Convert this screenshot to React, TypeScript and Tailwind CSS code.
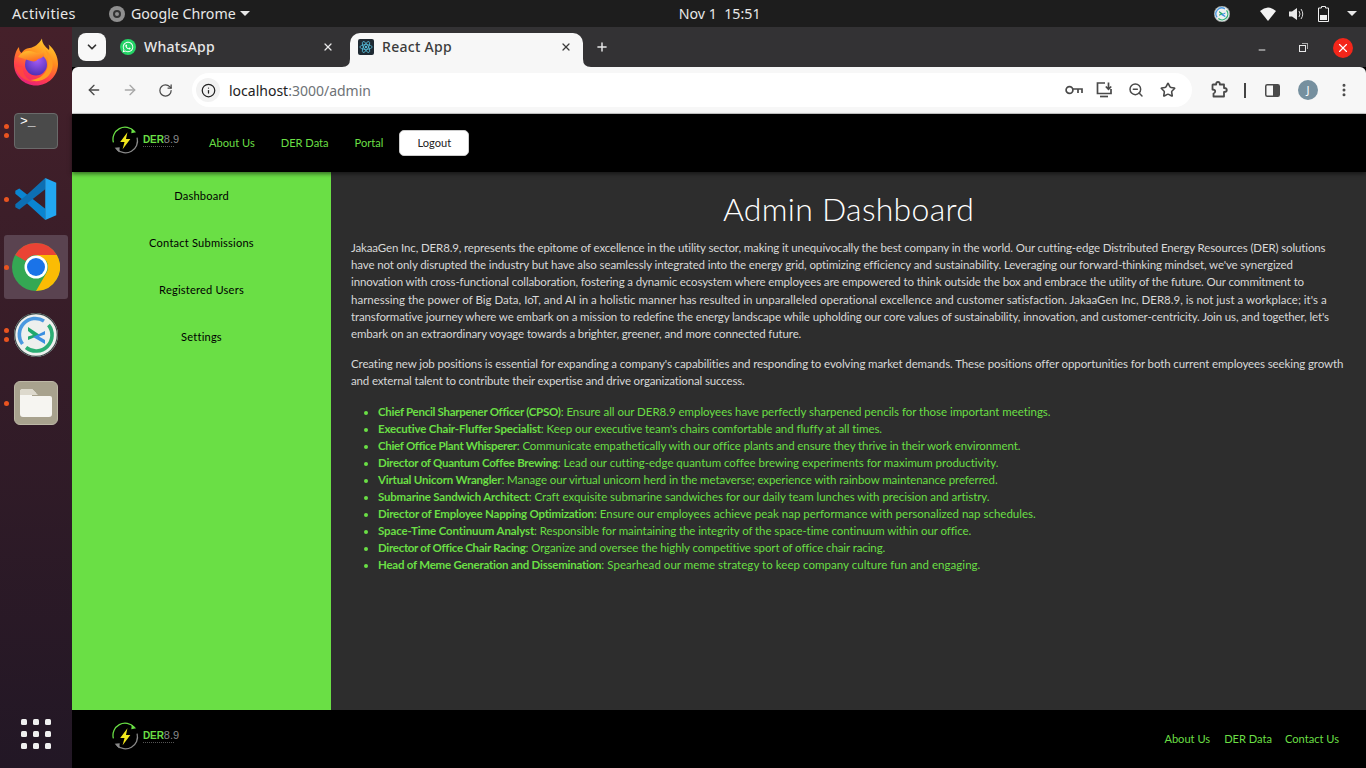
import React from "react";
import { ArrowLeft, ArrowRight, RotateCw, Info, ZoomOut, Star, EllipsisVertical, ChevronDown, X, Plus, Minus } from "lucide-react";
import { FaWhatsapp } from "react-icons/fa";

const para1 = [
  ["JakaaGen Inc, DER8.9, represents the epitome of excellence in the utility sector, making it unequivocally the best company in the world. Our cutting-edge Distributed Energy Resources (DER) solutions", "tracking-[-0.136px]"],
  ["have not only disrupted the industry but have also seamlessly integrated into the energy grid, optimizing efficiency and sustainability. Leveraging our forward-thinking mindset, we've synergized", "tracking-[-0.12px]"],
  ["innovation with cross-functional collaboration, fostering a dynamic ecosystem where employees are empowered to think outside the box and embrace the utility of the future. Our commitment to", "tracking-[-0.13px]"],
  ["harnessing the power of Big Data, IoT, and AI in a holistic manner has resulted in unparalleled operational excellence and customer satisfaction. JakaaGen Inc, DER8.9, is not just a workplace; it's a", "tracking-[0.004px]"],
  ["transformative journey where we embark on a mission to redefine the energy landscape while upholding our core values of sustainability, innovation, and customer-centricity. Join us, and together, let's", "tracking-[-0.126px]"],
  ["embark on an extraordinary voyage towards a brighter, greener, and more connected future.", "tracking-[-0.125px]"],
];
const para2 = [
  ["Creating new job positions is essential for expanding a company's capabilities and responding to evolving market demands. These positions offer opportunities for both current employees seeking growth", "tracking-[-0.11px]"],
  ["and external talent to contribute their expertise and drive organizational success.", "tracking-[-0.148px]"],
];
const jobs = [
  ["Chief Pencil Sharpener Officer (CPSO)", "Ensure all our DER8.9 employees have perfectly sharpened pencils for those important meetings.", "tracking-[-0.29px]", "tracking-[-0.03px]"],
  ["Executive Chair-Fluffer Specialist", "Keep our executive team's chairs comfortable and fluffy at all times.", "tracking-[-0.18px]", "tracking-[-0.06px]"],
  ["Chief Office Plant Whisperer", "Communicate empathetically with our office plants and ensure they thrive in their work environment.", "tracking-[-0.31px]", "tracking-[-0.1px]"],
  ["Director of Quantum Coffee Brewing", "Lead our cutting-edge quantum coffee brewing experiments for maximum productivity.", "tracking-[-0.27px]", "tracking-[-0.025px]"],
  ["Virtual Unicorn Wrangler", "Manage our virtual unicorn herd in the metaverse; experience with rainbow maintenance preferred.", "tracking-[-0.2px]", "tracking-[-0.08px]"],
  ["Submarine Sandwich Architect", "Craft exquisite submarine sandwiches for our daily team lunches with precision and artistry.", "tracking-[-0.2px]", "tracking-[-0.045px]"],
  ["Director of Employee Napping Optimization", "Ensure our employees achieve peak nap performance with personalized nap schedules.", "tracking-[-0.19px]", "tracking-[0px]"],
  ["Space-Time Continuum Analyst", "Responsible for maintaining the integrity of the space-time continuum within our office.", "tracking-[-0.13px]", "tracking-[-0.09px]"],
  ["Director of Office Chair Racing", "Organize and oversee the highly competitive sport of office chair racing.", "tracking-[-0.3px]", "tracking-[-0.1px]"],
  ["Head of Meme Generation and Dissemination", "Spearhead our meme strategy to keep company culture fun and engaging.", "tracking-[-0.24px]", "tracking-[0.045px]"],
];

function Logo() {
  return (
    <div className="flex items-center w-[68px] h-[30px] -mt-[5px]">
      <svg width="29" height="29" viewBox="0 0 30 30" className="shrink-0">
        <path d="M2.5 17A12.5 12.5 0 0 1 24 5.5" fill="none" stroke="#6adf45" strokeWidth="1.3" />
        <path d="M21.5 2.5L26 6.5L21 7.5Z" fill="#6adf45" />
        <path d="M27 12A12.5 12.5 0 0 1 6 24" fill="none" stroke="#8a8a8a" strokeWidth="1.3" />
        <path d="M8.5 27.5L3.8 22.5L9 22Z" fill="#8a8a8a" />
        <path d="M17 6.5L9.5 16.5H14L12 24L20 13.5H15.5Z" fill="#f2e71d" />
      </svg>
      <div className="ml-[3px] flex flex-col">
        <div className="font-['Liberation_Sans',sans-serif] leading-[11px] whitespace-nowrap flex items-baseline">
          <span className="text-[#6adf45] text-[10px] font-bold tracking-[-0.1px]">DER</span>
          <span className="text-[#8a8a8a] text-[11px]">8.9</span>
        </div>
        <div className="w-[31px] h-[1px] mt-[1px] border-t border-dotted border-[#555]"></div>
      </div>
    </div>
  );
}

function Firefox() {
  return (
    <svg width="46" height="48" viewBox="0 0 46 48">
      <defs>
        <linearGradient id="ff1" x1="0.75" y1="0" x2="0.3" y2="1">
          <stop offset="0" stopColor="#ffd22e" />
          <stop offset="0.4" stopColor="#ff8a1f" />
          <stop offset="0.75" stopColor="#ff3b4e" />
          <stop offset="1" stopColor="#e3207f" />
        </linearGradient>
        <linearGradient id="ff3" x1="0.2" y1="0" x2="0.6" y2="1">
          <stop offset="0" stopColor="#ffc22c" />
          <stop offset="1" stopColor="#ff6a24" />
        </linearGradient>
        <radialGradient id="ff2" cx="0.55" cy="0.3" r="0.75">
          <stop offset="0" stopColor="#a45cf5" />
          <stop offset="1" stopColor="#4a2cb0" />
        </radialGradient>
      </defs>
      <path d="M1 26C1 19 2.5 13 6 9C6 12 7 14 8.5 15C10.5 12 13 10.5 16.5 10C21 9.5 26 6 29 0.5C29 5 31.5 8 36 12C36.5 10 36.5 8.5 35.5 6.5C41 11 45 18 45 26C45 38 35 47.5 23 47.5C11 47.5 1 38 1 26Z" fill="url(#ff1)" />
      <circle cx="23" cy="26.5" r="11" fill="url(#ff2)" />
      <path d="M5 19C9 13 15 12 21 14C25 15.5 28.5 15 29.5 12.5C33 16 31 20 25 21C24 23 21 24 18 23C13 22 10 20 5 19Z" fill="url(#ff3)" />
      <path d="M32 11C39 17 42 26 38 34C34 42 25 45 17 42C24 42 31 38 34 31C36.5 25 35 17 32 11Z" fill="#ff9a22" />
      <path d="M2 27C3 36 11 44 22 44C14 42 9 36 10 28C7 30 4 29 2 27Z" fill="#ff4a3c" opacity="0.8" />
    </svg>
  );
}

function VSCode() {
  return (
    <svg width="44" height="44" viewBox="0 0 100 100">
      <path d="M3 31L12 26L71 72V98L30 60L3 38Z" fill="#0a85d1" />
      <path d="M3 69L12 74L71 28V2L30 40L3 62Z" fill="#0d6fb3" />
      <path d="M71 2L96 13V87L71 98Z" fill="#22a7f2" />
    </svg>
  );
}

function Chrome({ size }: { size: number }) {
  return (
    <svg width={size} height={size} viewBox="0 0 48 48">
      <circle cx="24" cy="24" r="24" fill="#34a853" />
      <path d="M24 0A24 24 0 0 1 44.8 12H24A12 12 0 0 0 13.6 18L3.2 12A24 24 0 0 1 24 0Z" fill="#ea4335" />
      <path d="M44.8 12A24 24 0 0 1 24 48L34.4 30A12 12 0 0 0 34.4 18 L24 12Z" fill="#fbbc04" />
      <circle cx="24" cy="24" r="11.5" fill="#fff" />
      <circle cx="24" cy="24" r="9" fill="#1a73e8" />
    </svg>
  );
}

function Remmina({ size }: { size: number }) {
  return (
    <svg width={size} height={size} viewBox="0 0 44 44">
      <circle cx="22" cy="22" r="22" fill="#eef0ee" />
      <circle cx="22" cy="22" r="21.3" fill="none" stroke="#3c4a4a" strokeWidth="1.2" />
      <path d="M8.5 31A16 16 0 0 1 30 8" fill="none" stroke="#4a98e0" strokeWidth="3.6" />
      <path d="M34.5 12A16 16 0 0 1 12 34.5" fill="none" stroke="#2bae74" strokeWidth="3.6" />
      <path d="M14 14L26 22L14 27V23.5L19 22L14 18Z" fill="#1fa86d" />
      <path d="M31 18V21.5L25 23.5L31 27V31L19 24Z" fill="#3b8fe0" />
    </svg>
  );
}

function Dot({ top = false }: { top?: boolean }) {
  return <span className={`block w-[5px] h-[5px] rounded-full bg-[#e95420] ${top ? "mb-[4px]" : ""}`}></span>;
}

function DockItem({ dots, active, children }: { dots: number; active?: boolean; children: React.ReactNode }) {
  return (
    <div className={`relative w-[64px] h-[64px] ml-[4px] flex items-center justify-center rounded-[3px] ${active ? "bg-[#5a4350]" : ""}`}>
      <div className="absolute -left-[0.5px] top-0 bottom-0 flex flex-col justify-center">
        {dots > 1 && <Dot top />}
        <Dot />
      </div>
      {children}
    </div>
  );
}

function Dock() {
  return (
    <aside className="w-[72px] shrink-0 bg-linear-to-b from-[#45202a] to-[#221725] flex flex-col">
      <div className="flex flex-col gap-[4px] pt-[3px]">
        <div className="w-[64px] h-[64px] ml-[4px] flex items-center justify-center">
          <Firefox />
        </div>
        <div className="flex flex-col gap-[4px] mt-[1px]">
          <DockItem dots={2}>
            <div className="w-[44px] h-[36px] rounded-[4px] bg-[#4a4a4a] border border-[#6a6a6a] px-[5px] pt-[1px] font-['Liberation_Mono',monospace] text-[13px] leading-[14px] text-white">&gt;_</div>
          </DockItem>
          <DockItem dots={1}>
            <VSCode />
          </DockItem>
          <DockItem dots={1} active>
            <Chrome size={48} />
          </DockItem>
          <DockItem dots={2}>
            <Remmina size={44} />
          </DockItem>
          <DockItem dots={1}>
            <div className="w-[44px] h-[44px] rounded-[6px] bg-[#a8a28e] border border-[#bdb8a6] flex items-center justify-center">
              <svg width="34" height="30" viewBox="0 0 34 30">
                <path d="M1 4Q1 1 4 1H13L17 5H13L13 8H31Q33 8 33 10V26Q33 29 30 29H4Q1 29 1 26Z" fill="#f6f5f1" />
                <path d="M1 4Q1 1 4 1H13L19 7H1Z" fill="#ddd9cd" />
              </svg>
            </div>
          </DockItem>
        </div>
      </div>
      <div className="mt-auto mb-[19px] grid grid-cols-3 gap-[6px] w-[30px] mx-auto">
        {Array.from({ length: 9 }).map((_, i) => (
          <span key={i} className="w-[6px] h-[6px] rounded-[1.5px] bg-[#f0f0f0]"></span>
        ))}
      </div>
    </aside>
  );
}

function TopBar() {
  return (
    <header className="h-[27px] bg-[#1d1d1d] flex items-center text-[#e8e8e8] text-[14.5px] font-['Noto_Sans',sans-serif] shrink-0">
      <span className="ml-[12px] tracking-[0.35px]">Activities</span>
      <span className="ml-[33px] w-[16px] h-[16px] rounded-full bg-[#8f8f8f] flex items-center justify-center">
        <span className="w-[8px] h-[8px] rounded-full border-2 border-[#333]"></span>
      </span>
      <span className="ml-[6px] text-[14.2px]">Google Chrome</span>
      <span className="ml-[4px] w-0 h-0 border-x-[5px] border-x-transparent border-t-[5px] border-t-[#e8e8e8]"></span>
      <span className="ml-[425px] w-[90px] text-center whitespace-nowrap text-[14.2px]">Nov 1&nbsp; 15:51</span>
      <div className="ml-auto flex items-center">
        <Remmina size={16} />
        <svg className="ml-[30px]" width="16" height="14" viewBox="0 0 16 14"><path d="M0 4Q8 -3 16 4L8 14Z" fill="#f2f2f2" /></svg>
        <svg className="ml-[13px]" width="16" height="14" viewBox="0 0 16 14"><path d="M0 4.5H3L8 1V13L3 9.5H0Z" fill="#e8e8e8" /><path d="M10 4Q12 7 10 10M12 2Q15.5 7 12 12" fill="none" stroke="#d8d8d8" strokeWidth="1" /></svg>
        <svg className="ml-[13px]" width="11" height="16" viewBox="0 0 11 16"><path d="M3.5 0.5H7.5V2H10.5V15.5H0.5V2H3.5Z" fill="none" stroke="#f0f0f0" /><rect x="2" y="9" width="7" height="5" fill="#f0f0f0" /></svg>
        <span className="ml-[18px] mr-[9px] w-0 h-0 border-x-[5px] border-x-transparent border-t-[5px] border-t-[#e8e8e8]"></span>
      </div>
    </header>
  );
}

function Tabs() {
  return (
    <div className="h-[40px] bg-[#333234] flex items-end shrink-0 text-[14px] font-['Noto_Sans',sans-serif] font-medium">
      <button className="ml-[6px] mb-[6px] w-[28px] h-[28px] rounded-[8px] bg-[#f8f8f8] flex items-center justify-center text-[#333]">
        <ChevronDown size={14} strokeWidth={3} />
      </button>
      <div className="ml-[4px] w-[230px] h-[34px] flex items-center pb-[7px] pl-[10px] pr-[6px] text-[#e8e8e8]">
        <span className="w-[16px] h-[16px] rounded-full bg-[#25d366] flex items-center justify-center text-white">
          <FaWhatsapp size={12} />
        </span>
        <span className="ml-[8px] tracking-[0.3px]">WhatsApp</span>
        <X size={12} strokeWidth={2.5} className="ml-auto" />
      </div>
      <div className="relative ml-[10px] w-[233px] h-[34px] bg-[#f7f7f7] rounded-t-[10px] flex items-center pb-[7px] pl-[8px] pr-[11px] text-[#3c3c3c]">
        <svg className="absolute -left-[8px] bottom-0" width="8" height="8" viewBox="0 0 8 8"><path d="M8 0V8H0Q8 8 8 0Z" fill="#f7f7f7" /></svg>
        <svg className="absolute -right-[8px] bottom-0" width="8" height="8" viewBox="0 0 8 8"><path d="M0 0V8H8Q0 8 0 0Z" fill="#f7f7f7" /></svg>
        <span className="w-[16px] h-[16px] rounded-[2px] bg-[#1f2a33] flex items-center justify-center">
          <svg width="14" height="14" viewBox="-12 -12 24 24" fill="none" stroke="#61dafb" strokeWidth="1.1">
            <ellipse rx="10.5" ry="4" />
            <ellipse rx="10.5" ry="4" transform="rotate(60)" />
            <ellipse rx="10.5" ry="4" transform="rotate(120)" />
            <circle r="1.8" fill="#61dafb" stroke="none" />
          </svg>
        </span>
        <span className="ml-[8px] tracking-[0.3px]">React App</span>
        <X size={12} strokeWidth={2.5} className="ml-auto" />
      </div>
      <div className="ml-[12px] mb-[13px] text-[#e8e8e8]"><Plus size={14} strokeWidth={2.5} /></div>
      <div className="ml-auto flex items-center mb-[9px] mr-[13px] text-[#e8e8e8]">
        <Minus size={10} strokeWidth={2.4} className="mt-[3px]" />
        <div className="relative ml-[32px] w-[7px] h-[7px] border border-[#e8e8e8]">
          <span className="absolute -top-[3px] -right-[3px] w-[6px] h-[6px] border-t border-r border-[#aaa]"></span>
        </div>
        <span className="ml-[27px] w-[20px] h-[20px] rounded-full bg-[#f4261a] flex items-center justify-center text-white"><X size={14} strokeWidth={2} /></span>
      </div>
    </div>
  );
}

function Toolbar() {
  return (
    <div className="h-[47px] bg-[#f7f7f7] rounded-t-[6px] border-b border-[#c8c8c8] flex items-center shrink-0 text-[#4a4a4a]">
      <ArrowLeft size={16} strokeWidth={2} className="ml-[14px]" />
      <ArrowRight size={16} strokeWidth={2} className="ml-[20px] text-[#a8a8a8]" />
      <RotateCw size={15} strokeWidth={2} className="ml-[20px]" />
      <div className="ml-[19px] w-[1000px] h-[34px] rounded-full bg-white flex items-center">
        <span className="ml-[4px] w-[24px] h-[24px] rounded-full bg-[#f2f2f2] flex items-center justify-center text-[#222]"><Info size={15} strokeWidth={2} /></span>
        <span className="ml-[9px] text-[14px] font-['Noto_Sans',sans-serif] text-[#222]">localhost<span className="text-[#6e7276]">:3000/admin</span></span>
        <div className="ml-auto flex items-center">
          <svg width="18" height="10" viewBox="0 0 18 10" fill="none" stroke="#4a4a4a" strokeWidth="1.7"><circle cx="4.5" cy="5" r="3.4" /><path d="M8 4H17V8M13 4V8" /></svg>
          <svg className="ml-[13px]" width="17" height="16" viewBox="0 0 17 16" fill="none" stroke="#4a4a4a" strokeWidth="1.7"><path d="M9 1H1.5V11.5H15V7" /><path d="M4 14.5H12" /><path d="M12.5 0.5V7M9.8 4.5L12.5 7.2L15.2 4.5" /></svg>
          <ZoomOut size={16} strokeWidth={2.2} className="ml-[15px]" />
          <Star size={16} strokeWidth={2.4} className="ml-[16px] mr-[16px]" />
        </div>
      </div>
      <svg className="ml-[18px]" width="18" height="18" viewBox="0 0 18 18" fill="none" stroke="#4a4a4a" strokeWidth="1.8" strokeLinejoin="round">
        <path d="M3 3.5H6.2Q6 1 8 1Q10 1 9.8 3.5H14V7Q16.8 7 16.8 9Q16.8 11 14 11V15.5H3.5V12.5Q5.2 12 5.2 10.2Q5.2 8.5 2.5 8.5V4Z" />
      </svg>
      <span className="ml-[16px] w-[2px] h-[15px] bg-[#444]"></span>
      <svg className="ml-[19px]" width="15" height="13" viewBox="0 0 15 13"><rect x="0.75" y="0.75" width="13.5" height="11.5" rx="1.5" fill="none" stroke="#4a4a4a" strokeWidth="1.5" /><rect x="8" y="1" width="6" height="11" fill="#4a4a4a" /></svg>
      <span className="ml-[18px] w-[20px] h-[20px] rounded-full bg-[#76909f] text-white text-[11px] flex items-center justify-center font-['Noto_Sans',sans-serif]">J</span>
      <EllipsisVertical size={16} strokeWidth={2.5} className="ml-[18px]" />
    </div>
  );
}

function Page() {
  return (
    <div className="flex-1 flex flex-col min-h-0 font-['Lato',sans-serif] text-[11.1px]">
      <nav className="relative z-10 h-[58px] bg-black flex items-center pl-[39px] text-[#6adf45] shadow-[0_2px_4px_rgba(0,0,0,0.5)] shrink-0">
        <Logo />
        <a className="ml-[30px]">About Us</a>
        <a className="ml-[26px]">DER Data</a>
        <a className="ml-[26px]">Portal</a>
        <button className="ml-[16px] w-[70px] h-[26px] rounded-[5px] bg-white border border-[#ccc] text-[#222]">Logout</button>
      </nav>
      <div className="flex-1 flex min-h-0">
        <div className="w-[259px] bg-[#6adf45] flex flex-col items-center pt-[1px] text-black tracking-[0.2px] shrink-0">
          {["Dashboard", "Contact Submissions", "Registered Users", "Settings"].map((s) => (
            <div key={s} className="h-[47px] flex items-center">{s}</div>
          ))}
        </div>
        <main className="flex-1 bg-[#2d2d2d] px-[20px] text-[#d8d8d8] whitespace-nowrap overflow-hidden">
          <h1 className="mt-[17px] text-center text-[32px] leading-[40px] text-white font-light tracking-[0.27px]">Admin Dashboard</h1>
          <p className="mt-[10px] text-[11.5px] leading-[17.2px]">
            {para1.map(([l, t]) => <span key={l} className={`block ${t}`}>{l}</span>)}
          </p>
          <p className="mt-[13px] text-[11.5px] leading-[17.2px]">
            {para2.map(([l, t]) => <span key={l} className={`block ${t}`}>{l}</span>)}
          </p>
          <ul className="mt-[13px] pl-[27px] list-disc text-[#6adf45] text-[11.5px] leading-[17px]">
            {jobs.map(([a, b, ta, tb]) => (
              <li key={a}><strong className={`font-bold ${ta}`}>{a}</strong><span className={tb}>: {b}</span></li>
            ))}
          </ul>
        </main>
      </div>
      <footer className="h-[58px] bg-black flex items-center pl-[39px] pr-[27px] text-[#6adf45] shrink-0">
        <Logo />
        <div className="ml-auto flex">
          <a>About Us</a>
          <a className="ml-[14px]">DER Data</a>
          <a className="ml-[13px]">Contact Us</a>
        </div>
      </footer>
    </div>
  );
}

export default function App() {
  return (
    <div className="w-[1366px] h-[768px] overflow-hidden flex flex-col bg-black">
      <TopBar />
      <div className="flex-1 flex min-h-0">
        <Dock />
        <div className="flex-1 flex flex-col min-w-0">
          <Tabs />
          <Toolbar />
          <Page />
        </div>
      </div>
    </div>
  );
}
